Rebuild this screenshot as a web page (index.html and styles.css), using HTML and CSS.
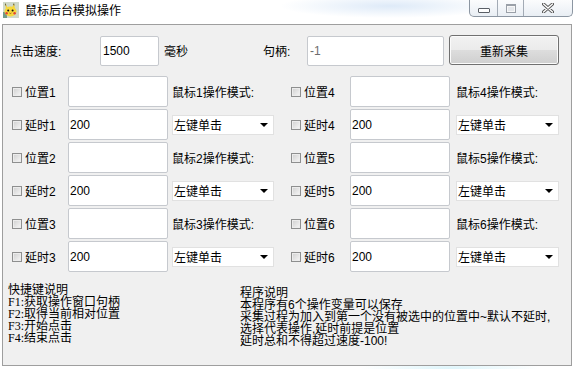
FILE: index.html
```html
<!DOCTYPE html>
<html lang="zh-CN">
<head>
  <meta charset="UTF-8" />
  <title>鼠标后台模拟操作</title>
  <link rel="stylesheet" href="styles.css">
</head>
<body>
  <div class="window">
    <div class="titlebar">
      <svg class="app-icon" viewBox="0 0 16 16" width="16" height="16">
        <rect x="0" y="0" width="16" height="16" fill="#cfd8c8"/>
        <rect x="0" y="10" width="4" height="6" fill="#6f9a8a"/>
        <path d="M2 1 L5 6 L3 7 Z" fill="#f4d23a"/>
        <path d="M2 1 L3.3 3.2 L2.4 3.6 Z" fill="#222"/>
        <path d="M11 1 L9 6 L12 7 Z" fill="#f4d23a"/>
        <path d="M11 1 L10.3 3 L11.4 3.4 Z" fill="#222"/>
        <ellipse cx="7.5" cy="9.5" rx="6" ry="5" fill="#f6d83c"/>
        <circle cx="5.2" cy="8.6" r="1" fill="#111"/>
        <circle cx="9.6" cy="8.6" r="1" fill="#111"/>
        <circle cx="3.6" cy="11.2" r="1.2" fill="#e0453a"/>
        <circle cx="11.6" cy="11.2" r="1.2" fill="#e0453a"/>
        <path d="M6.4 11 Q7.4 12 8.4 11" stroke="#7a3a1a" stroke-width="0.7" fill="none"/>
      </svg>
      <span class="title">鼠标后台模拟操作</span>
      <div class="caption-buttons">
        <span class="cap-btn cap-min"><i></i></span>
        <span class="cap-btn cap-max"><i></i></span>
        <span class="cap-btn cap-close">
          <svg viewBox="0 0 12 10" width="12" height="10">
            <path d="M1.5 1 L10.5 9 M10.5 1 L1.5 9" stroke="#555" stroke-width="3.2" stroke-linecap="round"/>
            <path d="M1.5 1 L10.5 9 M10.5 1 L1.5 9" stroke="#fff" stroke-width="1.4" stroke-linecap="round"/>
          </svg>
        </span>
      </div>
    </div>

    <div class="client">
      <div class="top-row">
        <label class="speed-label" for="speed">点击速度:</label>
        <input class="field speed" id="speed" type="text" value="1500">
        <span class="unit">毫秒</span>
        <label class="handle-label" for="handle">句柄:</label>
        <input class="field handle" id="handle" type="text" value="-1" readonly>
        <button class="btn" type="button">重新采集</button>
      </div>

      <div class="slots">
        <div class="group group-left">
          <label class="check"><input type="checkbox">位置1</label>
          <input class="field slot" type="text">
          <span class="mode-label">鼠标1操作模式:</span>

          <label class="check"><input type="checkbox">延时1</label>
          <input class="field slot" type="text" value="200">
          <span class="combo"><select><option>左键单击</option><option>右键单击</option><option>左键双击</option></select></span>

          <label class="check"><input type="checkbox">位置2</label>
          <input class="field slot" type="text">
          <span class="mode-label">鼠标2操作模式:</span>

          <label class="check"><input type="checkbox">延时2</label>
          <input class="field slot" type="text" value="200">
          <span class="combo"><select><option>左键单击</option><option>右键单击</option><option>左键双击</option></select></span>

          <label class="check"><input type="checkbox">位置3</label>
          <input class="field slot" type="text">
          <span class="mode-label">鼠标3操作模式:</span>

          <label class="check"><input type="checkbox">延时3</label>
          <input class="field slot" type="text" value="200">
          <span class="combo"><select><option>左键单击</option><option>右键单击</option><option>左键双击</option></select></span>
        </div>

        <div class="group group-right">
          <label class="check"><input type="checkbox">位置4</label>
          <input class="field slot" type="text">
          <span class="mode-label">鼠标4操作模式:</span>

          <label class="check"><input type="checkbox">延时4</label>
          <input class="field slot" type="text" value="200">
          <span class="combo"><select><option>左键单击</option><option>右键单击</option><option>左键双击</option></select></span>

          <label class="check"><input type="checkbox">位置5</label>
          <input class="field slot" type="text">
          <span class="mode-label">鼠标5操作模式:</span>

          <label class="check"><input type="checkbox">延时5</label>
          <input class="field slot" type="text" value="200">
          <span class="combo"><select><option>左键单击</option><option>右键单击</option><option>左键双击</option></select></span>

          <label class="check"><input type="checkbox">位置6</label>
          <input class="field slot" type="text">
          <span class="mode-label">鼠标6操作模式:</span>

          <label class="check"><input type="checkbox">延时6</label>
          <input class="field slot" type="text" value="200">
          <span class="combo"><select><option>左键单击</option><option>右键单击</option><option>左键双击</option></select></span>
        </div>
      </div>

      <div class="notes">
        <div class="notes-left">
          <div>快捷键说明</div>
          <div>F1:获取操作窗口句柄</div>
          <div>F2:取得当前相对位置</div>
          <div>F3:开始点击</div>
          <div>F4:结束点击</div>
        </div>
        <div class="notes-right">
          <div>程序说明</div>
          <div>本程序有6个操作变量可以保存</div>
          <div>采集过程为加入到第一个没有被选中的位置中~默认不延时,</div>
          <div>选择代表操作,延时前提是位置</div>
          <div>延时总和不得超过速度-100!</div>
        </div>
      </div>
    </div>
  </div>
</body>
</html>
```

FILE: styles.css
```css
* {
  box-sizing: border-box;
}

body {
  margin: 0;
  background: #fff;
  font-family: "Liberation Sans", "Noto Sans CJK SC", sans-serif;
  font-size: 12px;
  color: #000;
}

.window {
  width: 574px;
  height: 369px;
  overflow: hidden;
  display: flex;
  flex-direction: column;
  background:
    radial-gradient(ellipse 110px 12px at 390px 6px, rgba(160, 195, 235, 0.35), transparent),
    radial-gradient(ellipse 90px 6px at 450px 368px, rgba(170, 230, 245, 0.4), transparent),
    #fff;
}

/* title bar */
.titlebar {
  height: 24px;
  flex-shrink: 0;
  display: flex;
  align-items: flex-start;
}

.app-icon {
  margin: 2px 0 0 3px;
}

.title {
  margin: 3px 0 0 6px;
  line-height: 14px;
  font-family: "Noto Sans CJK SC", sans-serif;
  font-size: 12px;
}

.caption-buttons {
  margin-left: auto;
  margin-right: 1px;
  display: flex;
  height: 17px;
  border: 1px solid #8c96a2;
  border-top: none;
  border-radius: 0 0 5px 5px;
  overflow: hidden;
  background: linear-gradient(#fbfcfd, #e9eef4);
}

.cap-btn {
  display: flex;
  align-items: center;
  justify-content: center;
  height: 100%;
}

.cap-min {
  width: 28px;
  border-right: 1px solid #a3abb5;
  align-items: flex-end;
  padding-bottom: 3px;
}

.cap-min i {
  width: 12px;
  height: 5px;
  border: 1px solid #5a5f66;
  border-radius: 1px;
  background: #fff;
}

.cap-max {
  width: 26px;
  border-right: 1px solid #a3abb5;
}

.cap-max i {
  width: 10px;
  height: 9px;
  border: 1px solid #9aa0a8;
  border-top-width: 2px;
  background: #e4e7eb;
  box-shadow: inset 0 0 0 1px #f7f7f7;
}

.cap-close {
  width: 48px;
}

/* client area */
.client {
  margin: 0 2px;
  height: 342px;
  border: 1px solid #9e9e9e;
  background: #f0f0f0;
  padding-top: 10px;
}

.top-row {
  display: flex;
  align-items: center;
  height: 30px;
  padding-left: 7px;
}

.speed-label {
  width: 90px;
}

.field {
  height: 31px;
  width: 100px;
  border: 1px solid #c6c9ce;
  border-radius: 2px;
  background: #fff;
  font: inherit;
  color: #000;
  padding: 0 2px;
  outline: none;
}

.field.speed {
  width: 59px;
  height: 30px;
  margin-top: 2px;
}

.unit {
  margin-left: 5px;
  width: 99px;
}

.handle-label {
  width: 44px;
}

.field.handle {
  width: 137px;
  height: 30px;
  margin-top: 2px;
  color: #6d6d6d;
}

.btn {
  margin-left: 5px;
  width: 110px;
  height: 30px;
  border: 1px solid #707070;
  border-radius: 3px;
  background: linear-gradient(#f2f2f2 0%, #ebebeb 50%, #dddddd 51%, #cfcfcf 100%);
  box-shadow: inset 0 0 0 1px #fbfbfb;
  font-family: "Noto Sans CJK SC", sans-serif;
  font-size: 12px;
  color: #000;
  padding: 0;
}

/* position / delay slots */
.slots {
  display: flex;
  margin-top: 11px;
  padding-left: 9px;
}

.group {
  display: grid;
  grid-auto-rows: 31px;
  row-gap: 2px;
  align-items: center;
}

.group-left {
  grid-template-columns: 56px 100px 106px;
}

.group-right {
  margin-left: 17px;
  grid-template-columns: 59px 100px 109px;
}

.check {
  display: flex;
  align-items: center;
  white-space: nowrap;
}

.check input {
  appearance: none;
  -webkit-appearance: none;
  width: 10px;
  height: 10px;
  margin: 0 3px 0 0;
  border: 1px solid #8e8f8f;
  background: linear-gradient(135deg, #cfcfcf, #f7f7f7);
  box-shadow: inset 0 0 0 1px #ececec;
}

.field.slot {
  width: 100px;
  height: 31px;
  padding-left: 1px;
}

.mode-label {
  margin-left: 4px;
  white-space: nowrap;
}

.group-right .mode-label {
  margin-left: 6px;
}

.combo {
  position: relative;
  margin-left: 4px;
  width: 102px;
  height: 20px;
}

.group-right .combo {
  margin-left: 6px;
  width: 103px;
}

.combo select {
  appearance: none;
  -webkit-appearance: none;
  width: 100%;
  height: 100%;
  border: 1px solid #e1e1e1;
  border-radius: 0;
  background: #fff;
  font-family: "Noto Sans CJK SC", sans-serif;
  font-size: 12px;
  color: #000;
  padding: 0 0 0 1px;
  outline: none;
}

.combo::after {
  content: "";
  position: absolute;
  right: 6px;
  top: 8px;
  border-left: 4px solid transparent;
  border-right: 4px solid transparent;
  border-top: 4px solid #000;
  pointer-events: none;
}

/* help text */
.notes {
  display: flex;
  margin-top: 12px;
  padding-left: 5px;
  line-height: 12px;
  white-space: nowrap;
}

.notes-left {
  width: 232px;
  font-family: "Liberation Serif", "Noto Sans CJK SC", serif;
}

.notes-right {
  margin-top: 3px;
}
```
